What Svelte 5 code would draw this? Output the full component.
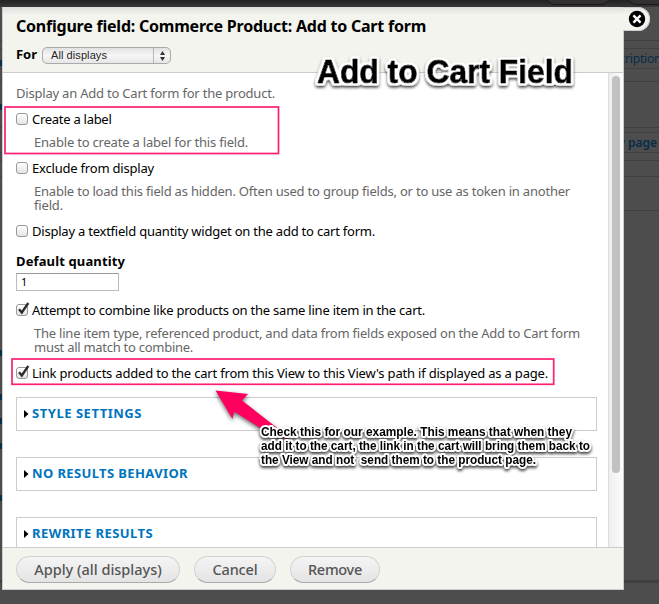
<script>
  const fieldsets = [
    { title: 'STYLE SETTINGS', width: 110 },
    { title: 'NO RESULTS BEHAVIOR', width: 156 },
    { title: 'REWRITE RESULTS', width: 121 }
  ];
  const buttons = [
    { label: 'Apply (all displays)', width: 164, text: 127.5 },
    { label: 'Cancel', width: 82, text: 45 },
    { label: 'Remove', width: 90, text: 54 }
  ];
  const notes = [
    { y: 436, width: 311, text: 'Check this for our example. This means that when they' },
    { y: 450, width: 329, text: 'add it to the cart, the link in the cart will bring them back to' },
    { y: 464, width: 275, text: 'the View and not \u00a0send them to the product page.' }
  ];

  // Spreads the letters of a line so that it fills the given width.
  function fit(node, width) {
    const natural = node.getBoundingClientRect().width;
    node.style.letterSpacing = `${(width - natural) / node.textContent.length}px`;
  }
</script>

{#snippet box(checked)}
  <span class="box">
    {#if checked}
      <svg width="15" height="15" viewBox="0 0 15 15"><path d="M3 7.2 5.8 10.5 12.3 1" fill="none" stroke="#2b2b2b" stroke-width="2.3" /></svg>
    {/if}
  </span>
{/snippet}

<div class="page">
  <div class="behind">
    <i class="topbar"></i>
    {#each [40, 48, 68, 81, 127, 132, 152, 160, 176, 210] as y}
      <i class="rule" style="top:{y}px"></i>
    {/each}
    <i class="band"></i>
    <b class="tab one"></b><b class="tab two"></b>
    <span class="link first">scription</span>
    <span class="link second">w page</span>
    {#each [60, 104, 350, 394, 418, 443, 495] as y}
      <em style="top:{y}px"></em>
    {/each}
  </div>

  <div class="close">
    <svg width="18" height="18" viewBox="0 0 18 18"><circle cx="9" cy="9" r="8.2" /><path d="M5.4 5.4 12.6 12.6M12.6 5.4 5.4 12.6" stroke="#fff" stroke-width="2.3" /></svg>
  </div>
  <section class="dialog">
    <header>
      <h1><span use:fit={410}>Configure field: Commerce Product: Add to Cart form</span></h1>
      <div class="for">
        <strong><span use:fit={21}>For</span></strong>
        <div class="select">
          <span class="value"><span use:fit={56}>All displays</span></span>
          <span class="arrows"><svg width="7" height="10" viewBox="0 0 7 10"><path d="M3.5 0 6 4H1ZM3.5 10 6 6H1Z" fill="#333" /></svg></span>
        </div>
      </div>
    </header>

    <div class="middle">
      <main>
        <div class="line grey intro"><span use:fit={259}>Display an Add to Cart form for the product.</span></div>
        <div class="line check create">{@render box(false)}<span use:fit={79.5}>Create a label</span></div>
        <div class="line grey help"><span use:fit={214}>Enable to create a label for this field.</span></div>
        <div class="line check exclude">{@render box(false)}<span use:fit={122}>Exclude from display</span></div>
        <div class="line grey help"><span use:fit={536}>Enable to load this field as hidden. Often used to group fields, or to use as token in another</span></div>
        <div class="line grey cont"><span use:fit={29}>field.</span></div>
        <div class="line check widget">{@render box(false)}<span use:fit={343}>Display a textfield quantity widget on the add to cart form.</span></div>
        <div class="line bold"><span use:fit={109}>Default quantity</span></div>
        <div class="input">1</div>
        <div class="line check combine">{@render box(true)}<span use:fit={393}>Attempt to combine like products on the same line item in the cart.</span></div>
        <div class="line grey help"><span use:fit={546}>The line item type, referenced product, and data from fields exposed on the Add to Cart form</span></div>
        <div class="line grey cont"><span use:fit={159}>must all match to combine.</span></div>
        <div class="line check linkrow">{@render box(true)}<span use:fit={516}>Link products added to the cart from this View to this View's path if displayed as a page.</span></div>
        <div class="fieldsets">
          {#each fieldsets as f}
            <div class="fieldset">
              <svg width="5" height="8" viewBox="0 0 5 8"><path d="M0 0 4.5 4 0 8Z" /></svg>
              <span use:fit={f.width}>{f.title}</span>
            </div>
          {/each}
        </div>
      </main>
      <aside><div class="thumb"></div></aside>
    </div>

    <footer>
      {#each buttons as b}
        <div class="button" style="width:{b.width}px"><span use:fit={b.text}>{b.label}</span></div>
      {/each}
    </footer>
  </section>

  <svg class="marks" width="659" height="604" viewBox="0 0 659 604">
    <filter id="halo" x="-5%" y="-30%" width="110%" height="170%">
      <feMorphology in="SourceAlpha" operator="dilate" radius="2" result="fat" />
      <feGaussianBlur in="fat" stdDeviation="0.8" result="soft" />
      <feComponentTransfer in="soft" result="edge"><feFuncR type="linear" slope="0" intercept="1" /><feFuncG type="linear" slope="0" intercept="1" /><feFuncB type="linear" slope="0" intercept="1" /><feFuncA type="linear" slope="2.2" intercept="-0.5" /></feComponentTransfer>
      <feDropShadow in="edge" dx="0" dy="2" stdDeviation="1.4" flood-opacity="0.75" result="lifted" />
      <feMerge><feMergeNode in="lifted" /><feMergeNode in="SourceGraphic" /></feMerge>
    </filter>
    <g fill="none" stroke="#fc1f72" stroke-width="1.7">
      <rect x="5" y="107" width="273.5" height="46.5" />
      <rect x="12" y="359" width="541.7" height="25.3" />
    </g>
    <path class="arrow" d="M215.500 390.500 248 394 242 400.500 276 427 290 440 268 433 234 411.500 232.500 419Z" />
    <text class="title" x="317" y="83" textLength="256" lengthAdjust="spacingAndGlyphs" filter="url(#halo)">Add to Cart Field</text>
    {#each notes as n}
      <text class="note" x="261" y={n.y} textLength={n.width} lengthAdjust="spacingAndGlyphs">{n.text}</text>
    {/each}
  </svg>
</div>

<style>
  .page { position: relative; width: 659px; height: 604px; overflow: hidden; background: #4d4d4d; font-family: "Noto Sans", "Open Sans", sans-serif; font-size: 13px; color: #000; }
  .page :global(span) { white-space: pre; }
  .behind { position: absolute; inset: 0; }
  .behind i { position: absolute; left: 0; right: 0; }
  .topbar { top: 0; height: 7px; background: linear-gradient(#222, #383536); }
  .rule { height: 1px; background: #414141; }
  .band { top: 580px; height: 3px; background: #3f3f3f; }
  .behind em { position: absolute; left: 0; width: 2px; height: 6px; background: #092f49; }
  .tab { position: absolute; top: -16px; height: 19px; border: 1px solid #191919; border-radius: 10px; background: #323031; }
  .tab.one { left: 545px; width: 64px; }
  .tab.two { left: 627px; width: 80px; }
  .link { position: absolute; color: #062c47; font-size: 12px; line-height: 14px; }
  .first { left: 614px; top: 52px; letter-spacing: -0.2px; }
  .second { left: 615px; top: 136px; font-weight: 600; }
  .close { position: absolute; left: 600px; top: 7px; width: 50px; height: 24px; box-sizing: border-box; padding: 3px 0 0 28px; background: linear-gradient(#e3e3df, #f3f4ee 7px); border-radius: 0 12px 12px 0; box-shadow: inset 0 0 0 1px #ccc; }
  .close svg { display: block; }
  .dialog { position: relative; display: flex; flex-direction: column; box-sizing: border-box; width: 622px; height: 583px; margin-left: 2px; top: 7px; border: 1px solid #ccc; border-top: 0; background: #fff; }
  .dialog::after { content: ""; position: absolute; right: -1px; top: 1px; width: 1px; height: 22px; background: linear-gradient(#e3e3df, #f3f4ee 7px); }
  header { box-sizing: border-box; height: 66px; padding: 7px 13px 0; background: linear-gradient(#dededb, #f3f4ee 8px); border-bottom: 1px solid #ccc; }
  h1 { margin: 0; font-size: 16px; line-height: 24px; font-weight: 700; }
  h1 span, strong span, .value span { display: inline-block; }
  .for { display: flex; align-items: center; height: 17px; margin-top: 9px; }
  .for strong { width: 26px; line-height: 17px; margin-top: -2px; }
  .select { display: flex; box-sizing: border-box; width: 129px; height: 17px; border: 1px solid #aaa; border-radius: 5px; background: linear-gradient(#e1e1e1, #f6f6f6 50%, #e6e6e6); }
  .value { width: 110px; padding-left: 8px; box-sizing: border-box; font: 11px/15px "Liberation Sans", Arial, sans-serif; color: #222; }
  .arrows { display: flex; justify-content: center; align-items: center; width: 16px; border-left: 1px solid #b8b8b8; }
  .middle { display: flex; height: 474px; overflow: hidden; }
  main { width: 605px; padding: 13px 0 0 13px; box-sizing: border-box; }
  aside { flex: 1; padding: 3px 0 0 3px; background: linear-gradient(90deg, #eee, #fcfcfc); border-left: 1px solid #ddd; }
  .thumb { width: 8px; height: 397px; border-radius: 4px; background: #c1c1c1; }
  .line { display: flex; height: 14px; line-height: 14px; }
  .grey { color: #666; }
  .bold { font-weight: 700; margin-top: 16px; }
  .help { padding-left: 18px; margin-top: 9px; }
  .cont { padding-left: 18px; }
  .create, .exclude, .widget, .linkrow, .combine { margin-top: 12px; }
  .box { box-sizing: border-box; width: 12px; height: 12px; margin: 1px 4px 0 0; border: 1px solid #999; border-radius: 3px; background: linear-gradient(#fff, #e4e4e4); }
  .box svg { display: block; margin: -3px 0 0 -1px; overflow: visible; width: 15px; }
  .input { box-sizing: border-box; width: 103px; height: 18px; margin-top: 5px; padding-left: 4px; border: 1px solid #bbb; border-top-color: #999; font-size: 11px; line-height: 16px; }
  .fieldsets { display: flex; flex-direction: column; gap: 26px; margin-top: 17px; }
  .fieldset { display: flex; align-items: center; box-sizing: border-box; width: 581px; height: 34px; flex: none; padding-left: 7px; gap: 3px; border: 1px solid #ccc; color: #0074bd; font-weight: 700; line-height: 14px; font-size: 13px; }
  .fieldset span { padding-bottom: 2px; }
  footer { display: flex; gap: 14px; padding: 8px 13px; box-sizing: border-box; height: 42px; border-top: 1px solid #ccc; background: #f3f4ee; }
  .button { display: flex; align-items: center; justify-content: center; box-sizing: border-box; height: 27px; padding-bottom: 2px; border: 1px solid #d2d2d2; border-bottom-color: #aaa; border-radius: 14px; background: linear-gradient(#f4f4f4, #e4e4e4); color: #555; font: 500 14.5px/22px "Noto Sans", "Open Sans", sans-serif; }
  .marks { position: absolute; left: 0; top: 0; }
  .arrow { fill: #ff005f; filter: drop-shadow(0 2px 2px rgba(0, 0, 0, 0.6)); }
  .title, .note { font-family: "Liberation Sans", Arial, sans-serif; font-weight: 700; fill: #000; stroke-linejoin: round; white-space: pre; }
  .title { font-size: 32.5px; stroke: #000; stroke-width: 0.9px; }
  .note { font-size: 12px; stroke: #fff; stroke-width: 4px; paint-order: stroke; filter: drop-shadow(0 2px 1.5px rgba(0, 0, 0, 0.75)); }
</style>
